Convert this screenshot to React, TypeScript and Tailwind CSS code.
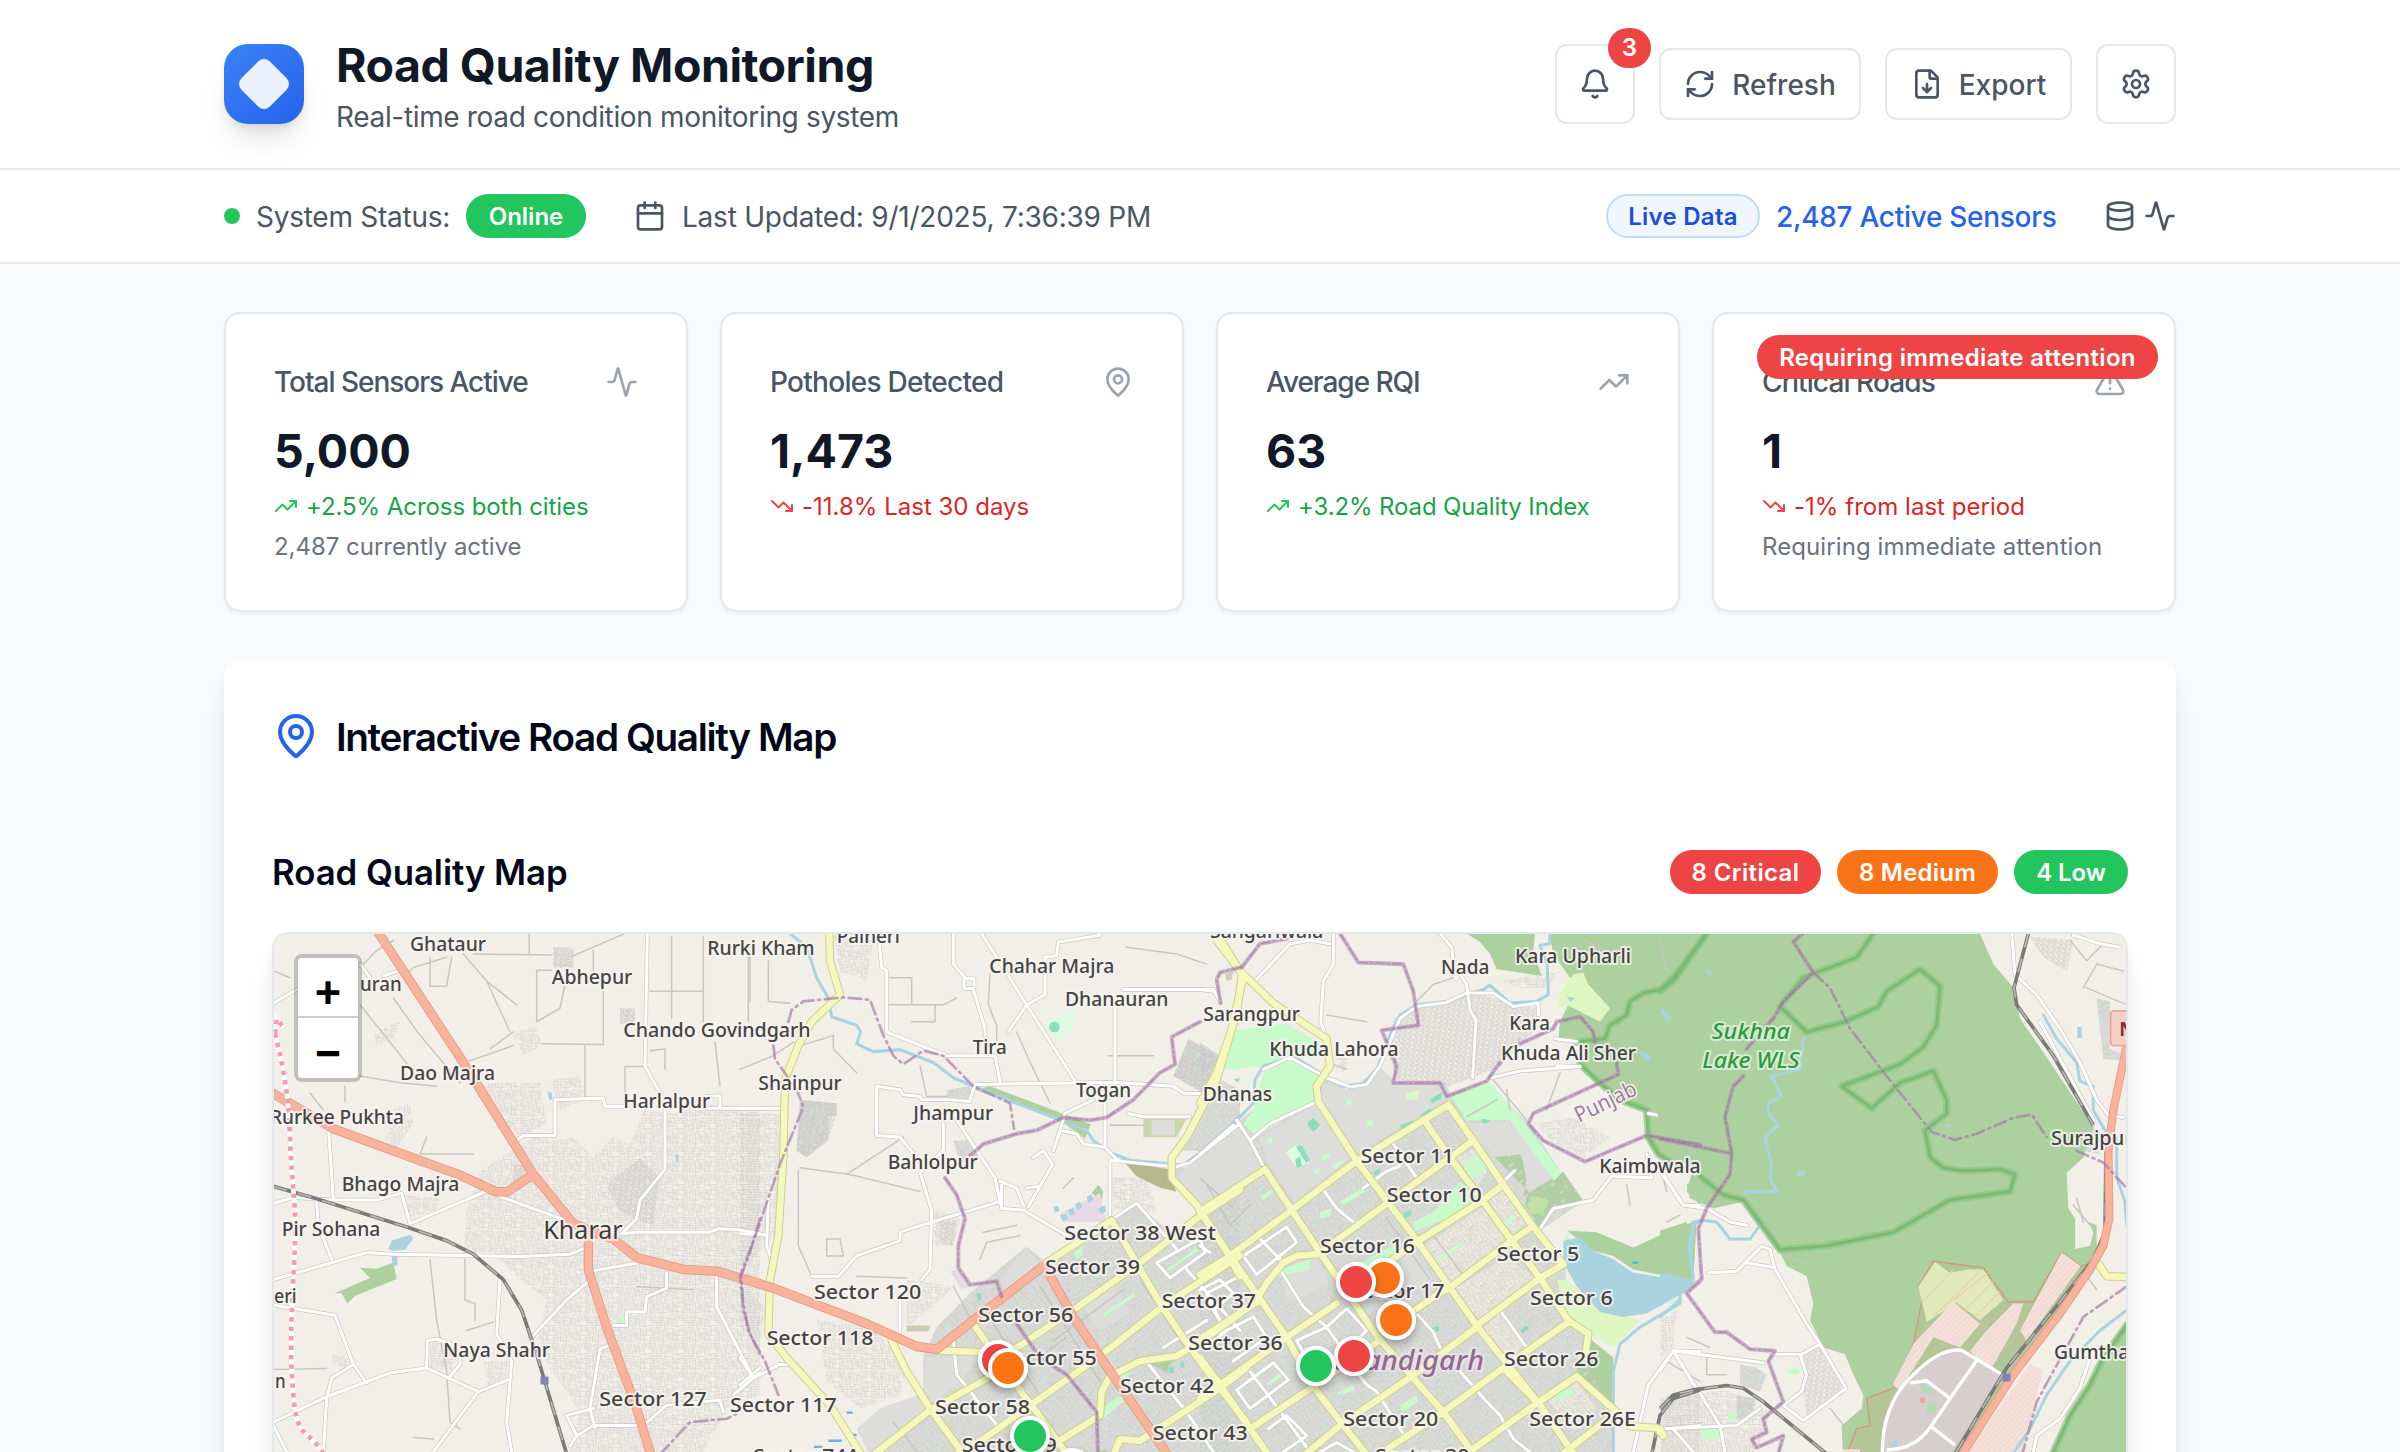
import type { ReactNode } from 'react';
import {
  Activity,
  Bell,
  Calendar,
  Database,
  FileDown,
  MapPin,
  RefreshCw,
  Settings,
  TrendingDown,
  TrendingUp,
  TriangleAlert,
  type LucideIcon,
} from 'lucide-react';

/* ------------------------------------------------------------------ */
/* Map data: four adjoining tiles, each in its own coordinate system   */
/* ------------------------------------------------------------------ */

type Tile = 'A' | 'B' | 'C' | 'D';
const TILE_X: Record<Tile, number> = { A: 260, B: 740, C: 1200, D: 1660 };
const TILES: Tile[] = ['A', 'B', 'C', 'D'];
const TILE_Y = 920;
const SX = 0.33333;
const SY = 0.33929;
const tile = (t: Tile) => `translate(${TILE_X[t]} ${TILE_Y}) scale(${SX} ${SY})`;
type PerTile = Record<Tile, string[]>;

const poly = (s: string, close = false) => 'M' + s + (close ? 'Z' : '');

function Layer({ data, close, ...rest }: { data: PerTile; close?: boolean } & Record<string, unknown>) {
  return (
    <g strokeLinejoin="round" strokeLinecap="round" fill="none" {...rest}>
      {TILES.map((t) => (
        <path key={t} transform={tile(t)} d={data[t].map((s) => poly(s, close)).join('')} />
      ))}
    </g>
  );
}

const CITY: PerTile = {
  A: [],
  B: [
    '550,1285 590,1200 690,1100 860,962 920,1010 1115,880 1190,835 1300,930 1390,860 1500,790 1500,1600 400,1600 350,1500 420,1440 550,1395',
    '1340,730 1500,600 1500,790 1390,860 1300,770 1300,730',
    '1320,680 1345,640 1440,470 1500,500 1500,580 1400,680',
    '1345,350 1435,400 1390,510 1300,460',
    '620,500 690,490 690,535 620,530', '180,530 290,540 290,575 265,580 265,650 200,700 170,680', '640,650 700,650 720,700 660,720',
  ],
  C: [
    '0,690 80,620 160,560 200,480 370,455 440,500 500,490 540,435 590,478 735,480 750,510 870,490 985,600 1085,745 1150,830 1020,915 1095,1010 1105,1180 1165,1220 1150,1290 1240,1440 1240,1600 0,1600',
    '0,360 60,400 30,450 0,450',
  ],
  D: ['1310,230 1350,240 1350,380 1400,400 1400,415 1330,410', '240,1310 290,1320 320,1340 300,1390 240,1370', '230,1400 290,1410 270,1470 230,1470', '1250,600 1300,600 1320,690 1270,680'],
};
/* Large plots inside the city that carry no street grid */
const PLAIN: PerTile = {
  A: [],
  B: ['560,1290 690,1285 800,1090 780,1060 860,965 905,1020 700,1180 740,1275 640,1380 560,1430 520,1480 430,1560 400,1590 350,1500 420,1440 550,1395', '1340,730 1500,610 1500,780 1390,850 1310,760', '1110,1060 1170,1160 1080,1210 1020,1130'],
  C: ['0,690 110,610 190,730 0,850', '370,480 440,500 540,440 590,480 735,485 740,530 470,690 360,530', '180,640 345,545 450,700 285,830 205,720', '770,600 930,595 1075,745 985,800 965,690 890,695 870,680', '290,1010 350,1000 390,1070 270,1130 240,1040', '600,990 640,980 700,1060 620,1110'],
  D: [],
};
const BEIGE: PerTile = {
  A: [],
  B: [],
  C: ['670,960 850,845 925,940 745,1070', '860,820 910,790 985,890 935,930', '760,1090 920,990 1010,1060 840,1180', '770,700 830,670 860,740 830,790', '850,1200 900,1160 980,1250 920,1300', '1030,1400 1130,1360 1190,1440 1120,1510'],
  D: [],
};
const FOREST: PerTile = {
  A: ['225,1100 330,1055 300,1025 350,1028 400,1010 410,1058 330,1090 285,1108 262,1130 245,1100'],
  B: ['705,500 750,490 1052,602 1035,645 960,590', '1075,780 1090,800 1085,825 1055,805', '1230,1290 1305,1280 1280,1335 1235,1310', '1060,1568 1100,1560 1100,1600'],
  C: [
    '800,40 1005,40 1000,90 1025,165 960,155 890,145 870,100 840,65',
    '1048,40 1500,40 1500,720 1400,712 1370,690 1340,640 1340,560 1240,510 1190,480 1140,430 1140,360 1075,350 1080,300 1150,160 1110,170 1060,100',
    '885,700 960,690 985,740 970,815 1090,742 1150,828 1060,855 1020,912 975,840 985,800',
    '1100,915 1190,920 1300,965 1400,920 1490,885 1480,1060 1400,1050 1300,1030 1240,990 1180,975',
    '1165,1230 1240,1290 1240,1440 1130,1330',
    '1475,745 1500,765 1500,840 1460,800',
  ],
  D: [
    '0,40 960,40 1000,130 1060,200 1080,290 1150,390 1300,610 1270,700 1220,745 1225,850 1245,880 1245,970 1290,960 1300,920 1285,890 1310,900 1310,1000 880,1600 550,1600 545,1490 605,1440 610,1400 580,1340 555,1280 490,1260 450,1180 460,1130 440,1050 380,1020 360,980 300,900 250,830 160,850 90,820 80,780 120,750 40,690 0,660',
    '0,915 80,890 100,960 90,1060 0,1060',
    '1400,1180 1330,1290 1290,1370 1230,1460 1170,1600 1400,1600',
  ],
};
const PARK: PerTile = {
  A: ['1070,1180 1095,1165 1095,1190'],
  B: ['1455,335 1500,325 1500,440 1450,440', '1085,1440 1150,1395 1150,1420 1090,1470', '1130,1345 1190,1325 1160,1345 1130,1370', '1280,1030 1370,965 1375,975 1285,1035', '1000,980 1030,960 1030,985 1010,1000', '1090,1160 1180,1100 1185,1110 1090,1170'],
  C: [
    '75,440 100,325 260,305 370,370 340,400 270,400 190,432',
    '190,450 270,405 370,460 345,530 170,640 130,600 160,560',
    '755,520 870,478 975,600 1085,745 1062,770 930,590 800,590',
    '790,720 830,690 860,730 820,765', '640,890 700,860 780,770 810,800 830,830 740,880 640,920', '480,1010 600,950 600,990 490,1030',
    '215,1040 330,1000 330,1030 240,1050', '1095,930 1110,915 1100,970', '1405,1130 1440,1110 1430,1130', '420,830 490,790 495,800 430,840',
    '600,1430 650,1400 655,1420 605,1450', '200,1365 250,1330 255,1340 205,1372', '410,1395 460,1370 465,1385 420,1400', '710,1000 780,950 785,960 715,1010',
    '1060,1400 1110,1380 1120,1400 1060,1420', '910,890 940,865 945,880 920,900', '180,815 215,795 218,805 190,825', '360,860 395,850 390,875 360,880', '500,590 520,590 520,608 502,608', '440,530 455,530 455,545 440,545',
    '360,700 385,685 390,700 370,712', '395,725 430,705 432,715 400,738', '200,650 215,640 218,655 205,660', '340,740 355,730 358,745 345,750',
  ],
  D: ['120,1495 175,1495 180,1530 125,1530', '205,1450 230,1450 225,1480 205,1480', '380,1325 415,1320 420,1335 390,1340', '20,1130 60,1110 50,1130'],
};
const LIME: PerTile = {
  A: [],
  B: [],
  C: ['1120,160 1150,155 1165,190 1230,260 1200,300 1100,250 1075,260 1080,215', '1070,1060 1100,1060 1200,1150 1320,1180 1240,1260 1165,1220 1100,1165', '620,510 660,500 650,530 620,530'],
  D: [],
};
const PITCH: PerTile = {
  A: [],
  B: ['930,305 945,300 958,315 945,330 930,322', '710,1100 722,1100 725,1120 714,1122', '1285,1320 1300,1315 1302,1335 1288,1336', '1320,1305 1332,1302 1334,1318 1322,1320'],
  C: ['320,600 340,583 360,605 340,625', '285,670 300,665 330,710 320,715', '600,605 640,590 640,605 605,620', '690,530 725,508 725,525 695,540', '845,585 870,590 860,600 848,598', '610,865 630,855 635,870 615,880', '285,710 300,698 305,725 288,730', '520,745 540,730 540,745 525,755', '690,1205 715,1195 718,1210 700,1218', '960,1210 980,1195 985,1205 968,1218', '660,575 690,555 700,565 670,580'],
  D: [],
};
const WATER: PerTile = {
  A: ['385,970 395,945 450,928 460,938 435,972 400,975', '395,990 412,990 412,1018 398,1020', '862,508 875,508 878,530 868,530', '1246,692 1255,692 1255,712 1248,712'],
  B: ['1040,815 1055,808 1060,825 1045,835', '1005,838 1020,830 1026,848 1012,855', '985,855 1000,848 1005,865 990,872', '960,872 978,866 985,880 970,888', '940,845 955,842 958,858 945,862', '1075,850 1095,840 1098,860 1080,865'],
  C: ['1090,945 1140,935 1180,975 1240,1000 1300,1040 1400,1055 1480,1060 1480,1085 1430,1110 1340,1160 1270,1170 1200,1155 1130,1080 1090,1010', '1380,260 1395,270 1415,290 1400,300', '1310,385 1345,395 1355,415 1335,410', '100,470 120,465 115,480', '1100,225 1125,230 1110,242'],
  D: ['0,1040 90,1060 70,1090 30,1120 0,1140', '410,740 440,740 430,755 415,755', '850,600 875,605 860,612', '138,140 158,160 145,162', '1252,315 1265,315 1265,348 1252,348', '0,260 30,280 25,300 5,275', '695,1540 715,1532 710,1550 690,1552'],
};
const STREAM: PerTile = {
  A: [],
  B: ['150,40 200,80 230,170 265,230 275,285 350,310 362,330 350,365 400,388 480,382 580,420 640,465 700,490 960,590 1040,620 1060,650 1110,685 1170,708 1330,722 1430,650 1500,575'],
  C: ['1050,40 1048,70 1020,75 1042,130 1045,220 1010,240 930,245 870,192 850,205 740,240 650,250 600,280 570,340 530,440 490,482 430,490 380,462 280,402 190,432 165,470 160,540 100,600 0,685', '1240,1600 1240,1330 1260,1250 1320,1200 1440,1130 1440,1100', '1500,885 1480,900 1470,980 1480,1060'],
  D: ['430,350 420,440 335,460 365,520 325,540 325,570 355,605 315,640 335,720 330,760 350,800 260,800 250,820 300,900 270,940 210,940 170,890 125,885 100,890 88,960 100,1060', '0,1170 60,1120', '1150,280 1190,350 1250,420 1260,475 1300,490 1300,560 1335,620', '1370,640 1370,760 1395,830 1400,900', '1400,1150 1320,1210 1230,1300 1160,1400 1110,1500 1040,1600'],
};
const TEXTURE: PerTile = {
  A: [
    '740,690 820,640 900,650 940,640 1000,700 1060,640 1110,660 1150,560 1240,570 1320,540 1500,560 1500,1400 1400,1440 1330,1568 930,1568 960,1450 830,1260 860,1120 780,1060 700,980 610,980 620,860 660,740',
    '880,80 940,80 940,140 880,140', '1080,260 1125,260 1125,305 1080,305', '755,330 830,315 845,370 790,400',
    '400,560 450,540 460,600 400,690 380,640', '340,330 420,300 400,350 350,370', '650,490 720,480 840,480 860,600 780,640 700,560', '870,470 960,460 980,530 900,560',
    '510,1240 600,1240 580,1330 510,1320', '670,1300 745,1300 735,1370 680,1370', '215,1280 270,1290 260,1320 215,1310', '420,810 540,820 530,850 450,880',
  ],
  B: ['0,570 130,570 130,900 0,1040', '280,40 400,60 380,180 300,150', '230,1180 400,1200 500,1320 480,1400 360,1440 260,1360', '500,1060 640,1080 600,1120 500,1200', '580,850 660,880 640,960 580,960', '1110,760 1220,760 1250,860 1120,850', '0,1080 80,1140 60,1240 0,1200'],
  C: ['1010,600 1120,580 1230,640 1150,700 1050,650', '400,400 450,410 430,450', '1080,150 1040,200 960,200 900,180', '1400,1400 1500,1390 1500,1568 1380,1568'],
  D: ['0,1410 200,1385 330,1450 290,1568 0,1568', '0,1180 50,1150 40,1260 0,1290'],
};
const DENSE: PerTile = {
  A: ['1040,780 1140,700 1200,760 1180,900 1080,860', '760,720 800,720 800,780 760,790', '880,80 940,80 940,140 880,140', '1080,260 1125,260 1125,305 1080,305'],
  B: ['180,530 290,540 290,575 265,640 200,700 170,680', '1345,350 1435,400 1390,510 1300,460', '600,880 650,890 640,960 600,950'],
  C: ['580,290 650,255 830,215 950,250 1020,260 1000,330 940,380 880,440 750,490 590,470 560,380'],
  D: ['430,1280 480,1260 550,1380 440,1460 430,1380', '1110,50 1240,60 1220,150 1150,110'],
};
const THIN: PerTile = {
  A: ['610,100 680,180 750,330', '640,100 875,103', '940,105 1090,42', '807,40 808,100', '875,148 830,148 830,300 900,260 915,190', '845,365 1030,367 1030,150', '975,370 975,520', '1170,210 1330,210', '1235,50 1235,290', '1330,50 1330,300', '630,415 760,370', '300,460 420,480 530,490', '510,1000 530,1180 560,1330 570,1480 600,1500', '1365,360 1380,490', '1215,380 1215,440', '1155,432 1095,432 1095,550', '1170,385 1215,380', '40,1325 200,1322', '620,1210 700,1185', '255,490 255,535', '150,510 190,560', '300,140 350,90 400,60', '300,250 390,360 470,460', '400,230 480,340 600,480', '430,170 460,140 560,110', '510,110 510,195 560,195 575,110', '500,640 480,690 640,690', '645,1180 645,1130 615,1120 615,1000', '1000,90 1000,150', '1470,100 1470,240', '690,380 760,330', '770,250 680,180', '1130,1080 1300,1090', '460,1525 520,1530', '90,170 40,150'],
  B: ['175,740 175,960 215,1050', '180,730 330,750 540,800', '180,370 250,350 280,340 280,380 350,450', '440,250 610,250 650,230', '450,170 515,170 515,250', '585,250 585,300 515,300', '1240,400 1105,400', '540,430 560,520 620,520', '320,750 490,640', '1110,605 1220,605', '830,330 880,440 930,540', '750,160 745,250 770,310 770,370', '0,440 100,400 160,360', '85,120 85,240 150,245', '25,100 25,300', '260,940 300,940 310,990 260,990Z', '1000,760 970,790', '730,920 830,900', '350,1050 500,1055', '720,1000 740,950 840,930', '640,1080 700,1190', '1160,80 1310,100 1400,130', '900,1080 1080,1360', '760,1190 900,1400', '1200,1060 1340,1270', '940,1240 1150,1090', '880,1300 980,1230', '600,1480 700,1600', '460,1480 560,1600'],
  C: ['650,240 700,190 760,170', '380,280 500,300', '960,350 900,430', '870,460 980,590', '800,580 890,530', '1080,450 1040,560', '1390,760 1400,800', '1150,60 1240,100 1290,70', '1380,50 1400,150', '1280,780 1290,840', '1400,1300 1500,1360', '0,760 100,850', '920,500 930,560', '380,420 440,440', '20,780 90,900 150,840', '60,830 190,750', '700,930 800,1060', '560,880 690,1060'],
  D: ['1230,60 1280,120 1330,70', '1270,200 1310,130 1390,150', '1280,200 1400,250', '80,1230 150,1260', '140,1280 140,1340 200,1340', '1240,840 1300,910', '1250,820 1270,890', '130,1050 60,1100', '510,1440 560,1500', '400,1000 440,1010', '20,890 60,870', '1280,1050 1310,1090'],
};
const WHITE: PerTile = {
  A: ['40,245 110,205', '370,165 415,150', '300,130 330,170', '1162,40 1155,430 1200,510', '770,650 790,635 885,635 885,530 1030,525 1035,550 1100,550', '1340,555 1500,555', '1380,555 1380,518 1340,520', '1215,560 1215,735 1140,825 1130,880 1085,925 1130,920 1350,920 1375,910 1430,912 1500,925', '205,610 220,825 350,825 425,805 450,895 690,795', '40,835 100,818 220,825', '170,830 175,900 215,1000', '40,1060 320,980 400,985 780,992 930,985 980,965', '720,815 930,890', '990,1035 1130,1012', '985,1065 920,1120 810,1235', '720,1060 710,1220 755,1300 740,1480 755,1568', '40,1135 225,1165 280,1310 320,1365', '40,1480 200,1405 390,1335 500,1320 655,1390 745,1355', '655,1390 520,1568', '500,1320 502,1240 530,1235 600,1260 600,1310 570,1345', '280,1310 215,1350 200,1410 190,1568', '40,1490 80,1568', '1005,1495 990,1440 1020,1265 1055,1250', '930,1550 950,1520 1000,1490 1150,1490 1220,1430 1380,1415 1390,1450', '950,1520 920,1460 1000,1440', '1220,1040 1220,1085 1160,1110 1155,1155 1100,1155 1100,1195 1060,1195', '1370,1040 1370,1140 1480,1350 1420,1400', '1480,1350 1500,1335'],
  B: ['640,40 640,130 675,170', '672,172 702,172 702,202 672,202Z', '700,205 735,320 735,340', '765,400 780,475', '725,40 860,250 1005,475', '860,250 805,330', '860,250 915,220 915,110 950,105 955,65 1080,45', '415,40 425,140 440,150 440,330 620,400 760,400', '690,530 705,485 1000,480 1125,478 1300,490 1330,510 1385,512', '1125,478 1125,250', '1150,205 1420,205 1440,240', '410,490 410,635 480,640 530,700', '410,490 480,500 490,515 540,520 545,530 635,530 690,535', '610,600 610,680 540,745 575,855 570,1030 545,1060', '650,590 765,760 785,850 850,855 980,930', '1060,530 975,570 960,620 1010,630 1030,660 1095,670 1135,710 1305,728 1350,715 1500,600', '960,620 940,680', '1095,540 1095,670', '1110,870 1110,710 1140,710', '880,700 910,680 938,720 865,845', '780,770 830,790 850,840', '860,790 900,785', '780,830 575,890 480,920 480,945 350,990 295,1050 215,1050', '785,770 785,850', '85,820 80,960 105,1030', '0,555 130,555', '0,925 80,928', '1165,570 1210,580 1350,580', '1120,880 1190,835 1310,970', '480,1120 480,1215', '640,1240 650,1340 780,1500', '1250,1010 1380,940 1395,980 1290,1055Z', '1340,1030 1500,1210', '0,1290 40,1350 120,1310', '150,1310 120,1310', '0,1370 60,1320', '1500,1050 1400,1100 1440,1180', '1210,1290 1340,1450 1420,1568', '1400,1180 1270,1260'],
  C: ['720,40 755,80 760,130 800,190 810,265 828,295 818,465', '400,40 400,130 370,180 362,300 380,350', '160,185 270,70 330,60 390,70', '110,590 150,650 195,735', '150,650 210,600 350,535', '0,205 40,210', '875,465 960,445 1140,432 1070,430', '1065,350 1130,358', '650,255 740,243 800,215 880,215 940,255 1015,245 1015,280', '190,440 270,405 380,465 450,492 500,485 540,430 600,290 650,255', '0,690 100,605', '910,770 945,738', '1020,910 1060,850 1180,825 1235,755 1355,760', '1340,690 1355,760', '1390,750 1450,840 1500,842', '1345,570 1370,575', '370,795 410,850 460,890', '490,790 560,740 600,725', '580,660 650,760', '130,990 260,905 290,950 170,1045Z', '180,940 250,1010', '240,1030 310,1140 380,1200 480,1340', '380,1200 440,1145 500,1210 440,1270', '380,1200 290,1240 320,1290', '900,1150 980,1260', '650,1160 700,1215 720,1260', '780,1330 860,1420 900,1460 940,1530 990,1568', '110,1385 220,1305 265,1355 150,1440Z', '150,1330 250,1460 330,1568', '205,1500 260,1460 320,1520 250,1568', '420,1270 500,1370 530,1390 620,1530', '0,1090 60,1060 100,1100 40,1150 80,1210 20,1260', '60,1220 160,1170 200,1230 100,1300', '1300,1568 1345,1370 1420,1270 1480,1370', '1420,1270 1500,1272', '1400,1500 1500,1490', '0,960 30,980', '360,1568 410,1540 460,1568'],
  D: ['1055,40 1065,160 1130,220 1200,320 1260,420 1310,530 1345,575 1390,582', '1240,45 1320,70 1380,80', '1140,300 1300,590', '40,1270 310,1305', '40,1270 180,1490 195,1568', '0,1330 40,1270', '340,1280 420,1280 440,1340 425,1390 370,1430 430,1475', '425,1280 480,1250 558,1380 430,1475', '480,1250 440,1190 345,1030 330,970 305,962 230,1035 145,1040', '345,1025 260,1010', '0,1500 230,1490 300,1440', '40,1500 100,1568', '1120,1568 1130,1520 1200,1470 1260,1380 1290,1290 1320,1260', '0,740 70,840 140,850 210,890 260,900'],
};
const YELLOW: PerTile = {
  A: [],
  B: ['268,40 270,120 300,220 215,300 175,370 135,470 130,700 115,930 90,1060 85,1220 140,1290 270,1430 380,1600', '1430,60 1500,150 1510,170 1470,340 1430,470 1340,640 1295,700 1295,760 1370,840 1465,985 1500,1050', '370,1600 570,1445 745,1350', '455,1240 500,1330 570,1440 690,1600', '590,1268 740,1275', '700,1190 760,1275 850,1400 890,1450 970,1560', '815,1270 1000,1150 1200,1010 1390,865 1500,795', '640,1580 730,1530 900,1410 1080,1285 1280,1130 1500,990', '920,1010 1115,885 1260,1130 1350,1260 1440,1380 1520,1480', '870,1590 1080,1460 1085,1390 1110,1345 1200,1300 1310,1285 1400,1230 1500,1160', '1110,1600 1140,1530 1200,1535 1440,1380 1520,1320'],
  C: ['50,40 120,150 220,245 380,350 390,430 350,490 355,535 470,710 640,930 830,1195 1020,1430 1140,1600', '125,165 110,280 50,450 0,540', '0,860 90,990 175,1110 260,1230 340,1375 430,1490 520,1600', '0,860 195,735', '195,735 275,855 360,980 530,1225 635,1345 730,1450 840,1600', '0,1045 90,990 275,855 470,710 745,545', '745,545 820,650 910,780 1000,905 1090,1015', '680,600 750,700 850,830 935,945 1020,1055 1105,1180 1165,1220 1155,1290', '360,980 555,840 820,650', '0,1235 180,1120', '175,1110 200,1070 250,1010 290,990 350,985', '550,1020 640,955 850,825 910,780', '260,1230 410,1130', '740,1090 935,945 995,905', '600,1180 740,1085', '830,1195 1020,1055 1090,1015', '0,1410 60,1370 260,1230', '340,1375 530,1245', '635,1345 830,1200', '730,1450 910,1320 1105,1185', '0,1290 60,1370 150,1500 230,1610', '150,1500 340,1375', '310,1580 420,1490 635,1345', '530,1580 730,1450', '790,1580 1010,1425 1130,1345 1250,1450', '910,1320 1020,1430', '1080,1580 1250,1450', '1290,1492 1370,1497 1390,1520'],
  D: ['1315,1012 1340,1050 1400,1052', '0,1500 10,1520'],
};
const ORANGE: PerTile = {
  A: ['350,30 610,420 820,750 940,895 1000,920 1060,940 1130,995 1200,1012 1270,1030 1370,1035 1500,1072', '20,500 220,615 400,680 600,752 705,800 740,802 820,750', '985,950 985,1030 1040,1200 1130,1440 1180,1600'],
  B: ['0,1055 100,1085 380,1190 530,1257 590,1265 700,1180 910,1020', '925,1040 1000,1170 1110,1330 1300,1600'],
  C: [],
  D: [],
};
const HIGHWAY: PerTile = { A: [], B: [], C: [], D: ['1398,380 1360,560 1345,680 1348,880 1330,960 1290,1030 1200,1160 1060,1340 890,1600'] };
const RAIL: PerTile = {
  A: ['40,785 165,820 440,905 560,945 640,985 730,1060 785,1150 830,1280 925,1590'],
  B: [],
  C: ['1350,1600 1380,1460 1420,1410 1500,1385'],
  D: ['1105,40 1062,200 1070,250 1180,400 1300,605', '1338,680 1335,920 1300,1000 1180,1150 1040,1320 960,1450 870,1600', '0,1440 40,1400 100,1385 200,1372 250,1380 310,1420 520,1590'],
};
const BORDER_SOLID: PerTile = {
  A: [],
  B: ['1500,140 1440,155 1430,175 1442,245', '1380,300 1295,345 1305,425 1260,450 1180,530 1100,582 1050,590 970,582 890,620 830,630 730,660 690,695', '615,760 650,810 675,880 655,960 655,1025 690,1075 770,1065 785,1110', '830,1190 900,1290 980,1340 1070,1450 1075,1600'],
  C: ['260,55 180,70 125,140', '420,40 475,125 610,130 640,210 655,310 545,325 590,430 580,480 720,480 740,520 860,475 900,420', '960,365 1060,320 1070,300 1140,285 1180,330 1185,360', '1250,420 1255,455 1000,570 985,600 1030,650 1155,712 1340,635 1500,662'],
  D: ['0,645 215,688', '215,688 210,750 140,850 115,910 125,1060 80,1100 165,1215 200,1215 270,1265 345,1270 325,1300 370,1420 310,1470 320,1510 275,1530 290,1555 370,1520 350,1590', '215,688 195,580 220,490 250,460', '260,380 340,290 370,240 460,155 400,65 430,38'],
};
const BORDER_DASH: PerTile = {
  A: ['1500,880 1470,980 1443,1050 1450,1130 1465,1210 1500,1280', '1200,1575 1290,1480 1400,1470 1430,1455'],
  B: ['145,300 155,265 190,240 310,228 390,235 430,340 460,400 490,425 550,385 610,400 700,490 810,540 822,615', '100,370 105,410 170,500 190,550 120,720 50,920 0,1050 10,1150 30,1220 75,1300 115,1400'],
  C: [],
  D: ['460,155 510,200 570,320 680,460 815,625 885,648 950,630 1060,583 1115,573 1160,640', '1250,680 1330,715 1400,790', '1400,1080 1270,1170 1180,1330 1130,1420 1080,1600'],
};
const RESERVE: PerTile = {
  A: [],
  B: [],
  C: ['1520,40 1420,170 1380,205 1330,215 1290,240 1280,280 1230,310 1215,350 1130,360', '1140,425 1200,480 1260,530 1340,560 1345,640 1375,690 1430,725'],
  D: ['140,40 40,180 0,210', '120,755 190,810 250,825 360,972 500,960 700,920 870,825 1050,800 1065,750 1020,735 910,740 850,730 810,700 795,620 860,570 860,530 820,445 720,480 635,555 545,490 720,425 790,375 830,310 840,195 780,145 680,210 655,255 555,300 440,330 360,255 430,170 590,110 640,40', '1400,1195 1330,1290 1290,1370 1230,1460 1170,1590'],
};
const QUARTER: PerTile = {
  A: [], B: [], C: [],
  D: ['880,1125 960,1190 900,1260 820,1230 720,1385 698,1370 760,1250', '1060,1130 1090,1130 1070,1190 990,1330 930,1270 980,1210', '1205,980 1262,1020 1100,1240 1080,1210', '1150,1325 1080,1600 900,1600 1110,1310', '550,1560 600,1560 600,1600 540,1600'],
};

const LABELS: { t: Tile; x: number; y: number; w: number; s: string; kind?: 'town' | 'city' | 'reserve' }[] = [
  { t: 'A', x: 450, y: 90, w: 228, s: 'Ghataur' },
  { t: 'A', x: 300, y: 208, w: 125, s: 'uran' },
  { t: 'A', x: 875, y: 190, w: 242, s: 'Abhepur' },
  { t: 'A', x: 1342, y: 103, w: 322, s: 'Rurki Kham' },
  { t: 'A', x: 1090, y: 344, w: 562, s: 'Chando Govindgarh' },
  { t: 'A', x: 420, y: 472, w: 285, s: 'Dao Majra' },
  { t: 'A', x: 1090, y: 555, w: 260, s: 'Harlalpur' },
  { t: 'A', x: 30, y: 602, w: 402, s: 'Rurkee Pukhta' },
  { t: 'A', x: 245, y: 799, w: 353, s: 'Bhago Majra' },
  { t: 'A', x: 65, y: 931, w: 296, s: 'Pir Sohana' },
  { t: 'A', x: 850, y: 940, w: 238, s: 'Kharar', kind: 'town' },
  { t: 'A', x: 42, y: 1130, w: 68, s: 'eri' },
  { t: 'A', x: 550, y: 1288, w: 320, s: 'Naya Shahr' },
  { t: 'A', x: 45, y: 1380, w: 32, s: 'n' },
  { t: 'A', x: 1018, y: 1433, w: 322, s: 'Sector 127' },
  { t: 'A', x: 1410, y: 1449, w: 320, s: 'Sector 117' },
  { t: 'B', x: 290, y: 68, w: 190, s: 'Palheri' },
  { t: 'B', x: 748, y: 157, w: 375, s: 'Chahar Majra' },
  { t: 'B', x: 975, y: 253, w: 310, s: 'Dhanauran' },
  { t: 'B', x: 698, y: 396, w: 102, s: 'Tira' },
  { t: 'B', x: 1008, y: 523, w: 165, s: 'Togan' },
  { t: 'B', x: 55, y: 500, w: 250, s: 'Shainpur' },
  { t: 'B', x: 520, y: 588, w: 240, s: 'Jhampur' },
  { t: 'B', x: 443, y: 735, w: 270, s: 'Bahlolpur' },
  { t: 'B', x: 973, y: 942, w: 455, s: 'Sector 38 West' },
  { t: 'B', x: 915, y: 1042, w: 285, s: 'Sector 39' },
  { t: 'B', x: 222, y: 1116, w: 322, s: 'Sector 120' },
  { t: 'B', x: 80, y: 1252, w: 320, s: 'Sector 118' },
  { t: 'B', x: 715, y: 1184, w: 285, s: 'Sector 56' },
  { t: 'B', x: 1265, y: 1143, w: 283, s: 'Sector 37' },
  { t: 'B', x: 1345, y: 1266, w: 283, s: 'Sector 36' },
  { t: 'B', x: 785, y: 1313, w: 285, s: 'Sector 55' },
  { t: 'B', x: 1140, y: 1394, w: 283, s: 'Sector 42' },
  { t: 'B', x: 1238, y: 1532, w: 285, s: 'Sector 43' },
  { t: 'B', x: 585, y: 1455, w: 285, s: 'Sector 58' },
  { t: 'B', x: 665, y: 1569, w: 285, s: 'Sector 59' },
  { t: 'B', x: 40, y: 1600, w: 320, s: 'Sector 74A' },
  { t: 'C', x: 30, y: 52, w: 340, s: 'Sangariwala' },
  { t: 'C', x: 10, y: 299, w: 290, s: 'Sarangpur' },
  { t: 'C', x: 8, y: 533, w: 208, s: 'Dhanas' },
  { t: 'C', x: 723, y: 159, w: 145, s: 'Nada' },
  { t: 'C', x: 945, y: 127, w: 348, s: 'Kara Upharli' },
  { t: 'C', x: 928, y: 323, w: 122, s: 'Kara' },
  { t: 'C', x: 208, y: 400, w: 388, s: 'Khuda Lahora' },
  { t: 'C', x: 903, y: 414, w: 405, s: 'Khuda Ali Sher' },
  { t: 'C', x: 482, y: 717, w: 280, s: 'Sector 11' },
  { t: 'C', x: 560, y: 831, w: 285, s: 'Sector 10' },
  { t: 'C', x: 360, y: 980, w: 285, s: 'Sector 16' },
  { t: 'C', x: 890, y: 1005, w: 248, s: 'Sector 5' },
  { t: 'C', x: 450, y: 1113, w: 283, s: 'Sector 17' },
  { t: 'C', x: 990, y: 1135, w: 248, s: 'Sector 6' },
  { t: 'C', x: 392, y: 1325, w: 460, s: 'Chandigarh', kind: 'city' },
  { t: 'C', x: 912, y: 1314, w: 283, s: 'Sector 26' },
  { t: 'C', x: 430, y: 1490, w: 285, s: 'Sector 20' },
  { t: 'C', x: 988, y: 1490, w: 320, s: 'Sector 26E' },
  { t: 'C', x: 525, y: 1600, w: 283, s: 'Sector 30' },
  { t: 'C', x: 1198, y: 746, w: 304, s: 'Kaimbwala' },
  { t: 'D', x: 155, y: 352, w: 235, s: 'Sukhna', kind: 'reserve' },
  { t: 'D', x: 127, y: 437, w: 292, s: 'Lake WLS', kind: 'reserve' },
  { t: 'D', x: 1173, y: 662, w: 245, s: 'Surajpur' },
  { t: 'D', x: 1182, y: 1293, w: 275, s: 'Gumthala' },
];

const LABEL_STYLE = {
  place: { fontSize: 20.6, fill: '#444444', stroke: '#f7f5f1' },
  town: { fontSize: 24.5, fill: '#3c3c3c', stroke: '#f7f5f1' },
  city: { fontSize: 26.5, fill: '#93698f', stroke: '#ece6ec' },
  reserve: { fontSize: 21.5, fill: '#2a9a3c', stroke: '#e3f2df' },
};

function MapDrawing() {
  return (
    <svg className="absolute inset-0" width="1852" height="518" viewBox="274 934 1852 518" fontFamily="'Noto Sans', sans-serif">
      <defs>
        <pattern id="streets" width="66" height="54" patternUnits="userSpaceOnUse" patternTransform="rotate(-33)">
          <path
            d="M0 1H66M0 10H18M24 8H46M52 12H66M0 18H28M34 16H66M8 25H40M46 22H60M0 32H22M28 30H66M6 39H34M40 37H60M0 46H24M30 45H66M12 50H50M1 0V54M7 18V32M13 0V18M18 25V46M24 1V18M30 16V30M34 30V54M41 0V16M40 22V45M47 16V37M53 0V22M54 30V54M60 12V30M61 37V45"
            stroke="#c3c2c1"
            strokeWidth="1.2"
            fill="none"
          />
        </pattern>
        <pattern id="blocks" width="74" height="58" patternUnits="userSpaceOnUse" patternTransform="rotate(-33)">
          <rect x="12" y="10" width="15" height="4" fill="#bdf2c2" />
          <rect x="48" y="34" width="4" height="9" fill="#bdf2c2" />
          <rect x="62" y="6" width="5" height="5" fill="#bdf2c2" />
          <rect x="24" y="44" width="10" height="3" fill="#bdf2c2" />
        </pattern>
        <pattern id="village" width="97" height="83" patternUnits="userSpaceOnUse">
          <path
            d="M0 4H22M30 6H58M66 3H97M4 11H34M40 12H72M80 10H97M0 18H26M34 19H50M58 17H90M8 25H44M52 26H80M0 33H18M26 32H62M70 34H97M6 40H40M48 41H76M0 48H30M38 47H56M64 49H97M12 55H46M54 56H84M0 62H24M32 63H66M74 61H97M6 70H38M46 69H78M0 77H20M28 78H60M68 76H97M4 0V18M10 4V25M17 11V33M22 0V11M26 18V40M34 6V25M40 12V32M44 0V12M50 19V41M58 6V26M62 17V34M66 0V17M72 12V34M80 3V26M86 17V41M92 4V18M6 33V55M12 40V62M18 48V70M30 40V63M38 32V55M46 47V69M54 41V63M60 49V78M66 56V76M76 41V61M84 49V76M92 34V61M8 62V83M20 70V83M28 63V83M38 70V83M46 69V83M74 61V83M88 61V83M14 78V83"
            stroke="#cccac6"
            strokeWidth="1.5"
            fill="none"
          />
        </pattern>
        <pattern id="dense" width="17" height="15" patternUnits="userSpaceOnUse" patternTransform="rotate(8)">
          <path d="M0 .5H17M0 5.5H8M6 10.5H17M.5 0V10M8 0V15M12.5 5V15M4 5V10M12 0V5" stroke="#c6c4c1" strokeWidth="1.4" fill="none" />
        </pattern>
        <pattern id="hatch" width="12" height="12" patternUnits="userSpaceOnUse" patternTransform="rotate(45)">
          <path d="M.5 0V12" stroke="#efb5a8" strokeWidth="1" />
        </pattern>
      </defs>
      <rect x="274" y="934" width="1852" height="518" fill="#f2efe9" />

      <Layer data={CITY} close fill="#dddddc" />
      <Layer data={BEIGE} close fill="#f0ebe3" />
      <Layer data={FOREST} close fill="#add19e" />
      <Layer data={TEXTURE} close fill="url(#village)" />
      <Layer data={DENSE} close fill="url(#dense)" />
      <Layer data={CITY} close fill="url(#streets)" />
      <Layer data={CITY} close fill="url(#blocks)" />
      <Layer data={PLAIN} close fill="#dddddc" />
      <Layer data={PARK} close fill="#c8facc" />
      <Layer data={LIME} close fill="#def6c0" />
      <Layer data={PITCH} close fill="#88e0be" />

      <g transform={tile('D')}>
        <path d="M620 1410 700 1380 760 1250 790 1100 775 1080 820 1005 970 1025 1045 1125 1120 1125 1205 980 1262 1020 1300 1010 880 1600H550L590 1500 630 1490Z" fill="#b4c698" stroke="#cf9a7b" strokeWidth="4" />
        <path d="M825 1008 870 1040 920 1030 970 1030 1030 1120 960 1180 890 1128 800 1185 775 1080Z" fill="#e0e9b8" />
        <path d="M785 1130 880 1030M820 1170 960 1035M880 1120 985 1040M915 1150 1000 1065M945 1170 1020 1095" stroke="#e9cfae" strokeWidth="3" />
      </g>
      <Layer data={QUARTER} close fill="#f3e0da" />
      <Layer data={QUARTER} close fill="url(#hatch)" />
      <g transform={tile('D')}>
        <path d="M668 1600 670 1480 740 1360 830 1290 900 1265 950 1290 1035 1345 860 1590Z" fill="#d9cfd0" />
        <path d="M668 1600 670 1480 740 1360 830 1290 900 1265 950 1290 1035 1345 860 1590Z" fill="url(#dense)" opacity=".35" />
        <g fill="none" stroke="#fff" strokeWidth="10" strokeLinejoin="round">
          <path d="M668 1600C660 1480 700 1400 750 1350S850 1262 905 1268L1035 1345" />
          <path d="M955 1292 870 1410 815 1490C780 1540 740 1560 680 1562M750 1365 800 1358 870 1410M812 1492 885 1548" />
        </g>
        <path d="M782 1366 820 1382 818 1400 784 1388ZM800 1426h26v26h-26z" fill="#b5dbb0" />
        <circle cx="787" cy="1416" r="9" fill="#f0a3a3" />
      </g>

      <g transform={tile('B')}>
        <path d="M915 300 1000 268 1003 320 955 362Z" fill="#dffce2" />
        <circle cx="943" cy="315" r="16" fill="#88e0be" />
        <path d="M1210 585H1340L1310 640H1210Z" fill="#c9d8a8" />
        <path d="M1235 590H1305V635H1235Z" fill="#dddddc" />
        <path d="M1150 710 1290 735 1308 800 1262 790 1190 755Z" fill="#b5b78e" />
        <path d="M960 865 1080 805 1100 890 965 890Z" fill="#e8d9e4" />
        <path d="M500 1195H572L565 1213H500Z" fill="#cccdb4" />
        <path d="M630 1035 655 1030 690 1080 665 1088Z" fill="#e6dbe6" />
        <path d="M265 1535h40M222 1553h26M320 1452h18M336 1518h14" stroke="#66b0f0" strokeWidth="7" />
      </g>
      <g transform={tile('C')}>
        <path d="M258 685 290 662 330 715 290 730Z" fill="#dffce2" />
        <path d="M288 668 305 664 330 708 318 716ZM286 705 300 698 306 725 290 732Z" fill="#88e0be" />
        <path d="M1298 1010h16" stroke="#5aa9f0" strokeWidth="7" />
        <path d="M75 160 100 150 95 175 80 180Z" fill="#d0cfb8" />
        <path d="M980 835 1010 815 1048 828 1030 862 992 868Z" fill="#c3e0a6" />
      </g>

      <Layer data={WATER} close fill="#aad3df" />
      <Layer data={STREAM} stroke="#a9d3e0" strokeWidth="9" />
      <Layer data={RESERVE} stroke="#8fc586" strokeWidth="22" strokeOpacity=".75" />
      <Layer data={RESERVE} stroke="#7dba74" strokeWidth="9" />

      <Layer data={THIN} stroke="#c8c6c3" strokeWidth="4.5" />
      <Layer data={WHITE} stroke="#c9c7c4" strokeWidth="13" />
      <Layer data={WHITE} stroke="#ffffff" strokeWidth="9" />
      <Layer data={RAIL} stroke="#7a7a78" strokeWidth="11" strokeLinecap="butt" />
      <Layer data={RAIL} stroke="#b9b8b5" strokeWidth="5" strokeDasharray="42 34" strokeLinecap="butt" />
      <Layer data={YELLOW} stroke="#cdd08d" strokeWidth="25" />
      <Layer data={YELLOW} stroke="#f5f8bd" strokeWidth="19" />
      <Layer data={ORANGE} stroke="#e39b7e" strokeWidth="28" strokeLinecap="butt" />
      <Layer data={ORANGE} stroke="#f9b29c" strokeWidth="23" />
      <Layer data={HIGHWAY} stroke="#ec9c86" strokeWidth="25" />
      <Layer data={HIGHWAY} stroke="#f9b29c" strokeWidth="19" />

      <g transform={tile('A')} fill="none">
        <path d="M45 335 50 292 70 315M45 335C60 400 85 480 90 640S112 820 103 1000 88 1260 100 1400 140 1490 195 1580" stroke="#fff" strokeWidth="14" />
        <path d="M45 335 50 292 70 315M45 335C60 400 85 480 90 640S112 820 103 1000 88 1260 100 1400 140 1490 195 1580" stroke="#f29bb2" strokeWidth="14" strokeDasharray="13 15" />
      </g>
      <Layer data={BORDER_SOLID} stroke="#ac83ad" strokeOpacity=".6" strokeWidth="12" />
      <Layer data={BORDER_SOLID} stroke="#8d6492" strokeOpacity=".45" strokeWidth="4" strokeDasharray="26 10 5 10" />
      <Layer data={BORDER_DASH} stroke="#a67da8" strokeOpacity=".7" strokeWidth="8" strokeDasharray="38 14 6 14" />

      <g fill="#7f84b9">
        <rect x="540.5" y="1376.5" width="8" height="8" />
        <rect x="2002.5" y="1373.5" width="8" height="8" />
      </g>
      <g transform={tile('D')}>
        <rect x="1352" y="268" width="90" height="102" rx="10" fill="#f6cfc5" stroke="#eba594" strokeWidth="5" />
        <text x="1378" y="342" fontSize="56" fontWeight="700" fill="#8a2d2d">N</text>
      </g>

      {LABELS.map(({ t, x, y, w, s, kind }) => {
        const st = LABEL_STYLE[kind ?? 'place'];
        return (
          <text
            key={t + x + y}
            x={TILE_X[t] + x * SX}
            y={TILE_Y + y * SY}
            textLength={w * SX}
            lengthAdjust="spacingAndGlyphs"
            fontSize={st.fontSize}
            fontStyle={kind === 'city' || kind === 'reserve' ? 'italic' : 'normal'}
            fontWeight={kind === 'town' ? 400 : 500}
            fill={st.fill}
            stroke={st.stroke}
            strokeOpacity=".8"
            strokeWidth="4"
            strokeLinejoin="round"
            paintOrder="stroke"
          >
            {s}
          </text>
        );
      })}
      <text x="1579" y="1123" fontSize="22" fill="#a07ba0" stroke="#f7f5f1" strokeWidth="3" paintOrder="stroke" textLength="66" lengthAdjust="spacingAndGlyphs" transform="rotate(-26 1579 1123)">
        Punjab
      </text>
    </svg>
  );
}

/* ------------------------------------------------------------------ */
/* Markers                                                             */
/* ------------------------------------------------------------------ */

const MARKERS: [number, number, string][] = [
  [998, 1360, 'bg-[#ef4444]'],
  [1008, 1368, 'bg-[#f97316]'],
  [1030, 1436, 'bg-[#22c55e]'],
  [1072, 1468, 'bg-[#ef4444]'],
  [1384, 1278, 'bg-[#f97316]'],
  [1356, 1282, 'bg-[#ef4444]'],
  [1396, 1320, 'bg-[#f97316]'],
  [1354, 1356, 'bg-[#ef4444]'],
  [1316, 1366, 'bg-[#22c55e]'],
];

/* ------------------------------------------------------------------ */
/* UI                                                                  */
/* ------------------------------------------------------------------ */

function Pill({ className, children }: { className: string; children: ReactNode }) {
  return (
    <span className={`flex h-11 items-center justify-center whitespace-nowrap rounded-full pt-px text-[24px] font-semibold leading-8 ${className}`}>
      {children}
    </span>
  );
}

const BUTTON = 'flex items-center justify-center rounded-xl border-2 border-[#e5e7eb] bg-white text-[28px] font-medium leading-10 text-[#4b5563]';

interface Stat {
  title: string;
  titleTracking: string;
  icon: LucideIcon;
  value: string;
  up: boolean;
  change: string;
  changeTracking: string;
  note?: string;
  noteTracking?: string;
  alert?: string;
}

const STATS: Stat[] = [
  { title: 'Total Sensors Active', titleTracking: 'tracking-[-1.03px]', icon: Activity, value: '5,000', up: true, change: '+2.5% Across both cities', changeTracking: 'tracking-[-0.07px]', note: '2,487 currently active', noteTracking: 'tracking-[-0.03px]' },
  { title: 'Potholes Detected', titleTracking: 'tracking-[-0.72px]', icon: MapPin, value: '1,473', up: false, change: '-11.8% Last 30 days', changeTracking: 'tracking-[0.01px]' },
  { title: 'Average RQI', titleTracking: 'tracking-[-1.04px]', icon: TrendingUp, value: '63', up: true, change: '+3.2% Road Quality Index', changeTracking: 'tracking-[-0.12px]' },
  { title: 'Critical Roads', titleTracking: 'tracking-[-0.9px]', icon: TriangleAlert, value: '1', up: false, change: '-1% from last period', changeTracking: 'tracking-[0.03px]', note: 'Requiring immediate attention', noteTracking: 'tracking-[0.09px]', alert: 'Requiring immediate attention' },
];

function StatCard({ stat }: { stat: Stat }) {
  const Trend = stat.up ? TrendingUp : TrendingDown;
  return (
    <div className="relative h-[300px] rounded-2xl border-2 border-[#e2e8f0] bg-white p-12 shadow-[0_2px_4px_0_rgba(0,0,0,0.05)]">
      {stat.alert && (
        <div className="absolute right-4 top-[21px]">
          <Pill className="w-[401px] bg-[#ef4444] tracking-[0.33px] text-white">{stat.alert}</Pill>
        </div>
      )}
      <div className="flex h-10 items-center justify-between">
        <h3 className={`whitespace-nowrap text-[28px] font-medium leading-10 text-[#4b5563] ${stat.titleTracking}`}>{stat.title}</h3>
        <stat.icon className="size-8 text-[#9ca3af]" />
      </div>
      <div className="-mb-0.5 mt-4 text-[46.5px] font-bold leading-[66px] text-[#111827]">{stat.value}</div>
      <div className={`mt-2 flex h-8 items-center gap-2 whitespace-nowrap text-[24px] leading-8 ${stat.up ? 'text-[#16a34a]' : 'text-[#dc2626]'} ${stat.changeTracking}`}>
        <Trend className={`size-6 ${stat.up ? 'text-[#22c55e]' : 'text-[#ef4444]'}`} />
        <span className="pt-px">{stat.change}</span>
      </div>
      {stat.note && <div className={`mt-2 whitespace-nowrap pt-px text-[24px] leading-8 text-[#6b7280] ${stat.noteTracking}`}>{stat.note}</div>}
    </div>
  );
}

export default function App() {
  return (
    <div className="h-[1452px] w-full overflow-hidden bg-[#f9fafb] font-['Inter',sans-serif]">
      <header className="h-[170px] border-b-2 border-[#e5e7eb] bg-white">
        <div className="mx-auto flex h-[168px] w-[1952px] items-center justify-between">
          <div className="flex items-center gap-8">
            <div className="flex size-20 items-center justify-center rounded-3xl bg-linear-to-br from-[#3b82f6] to-[#2563eb] shadow-[0_20px_30px_-6px_rgba(0,0,0,0.1),0_8px_12px_-4px_rgba(0,0,0,0.1)]">
              <div className="size-10 rotate-45 rounded-lg bg-white/90" />
            </div>
            <div>
              <h1 className="-mb-px whitespace-nowrap text-[46.5px] font-bold leading-[66px] tracking-[-0.5px] text-[#111827]">Road Quality Monitoring</h1>
              <p className="whitespace-nowrap text-[28px] leading-10 tracking-[-0.34px] text-[#4b5563]">Real-time road condition monitoring system</p>
            </div>
          </div>
          <div className="flex items-center gap-6">
            <button className={`relative size-20 ${BUTTON}`}>
              <Bell className="size-8" />
              <span className="absolute -right-[18px] -top-[18px] flex h-10 w-[43px] items-center justify-center rounded-full bg-[#ef4444] text-[24px] font-semibold leading-8 text-white">3</span>
            </button>
            <button className={`h-[72px] w-[202px] gap-4 ${BUTTON}`}>
              <RefreshCw className="size-8" />
              <span className="pt-px">Refresh</span>
            </button>
            <button className={`h-[72px] w-[187px] gap-4 ${BUTTON}`}>
              <FileDown className="size-8" />
              <span className="pt-px">Export</span>
            </button>
            <button className={`size-20 ${BUTTON}`}>
              <Settings className="size-8" />
            </button>
          </div>
        </div>
      </header>

      <div className="h-[94px] border-b-2 border-[#e5e7eb] bg-white">
        <div className="mx-auto flex h-[92px] w-[1952px] items-center justify-between text-[28px] leading-10 text-[#4b5563]">
          <div className="flex items-center gap-12">
            <div className="flex items-center gap-4">
              <span className="size-4 rounded-full bg-[#22c55e]" />
              <span className="w-[194px] whitespace-nowrap pt-px tracking-[-0.25px]">System Status:</span>
              <Pill className="w-[120px] bg-[#22c55e] text-white">Online</Pill>
            </div>
            <div className="flex items-center gap-4">
              <Calendar className="size-8" />
              <span className="whitespace-nowrap pt-px tracking-[-0.23px]">Last Updated: 9/1/2025, 7:36:39 PM</span>
            </div>
          </div>
          <div className="flex items-center gap-12">
            <div className="flex items-center gap-4">
              <Pill className="w-[154px] border-2 border-[#bfdbfe] bg-[#eff6ff] tracking-[0.26px] text-[#1d4ed8]">Live Data</Pill>
              <span className="w-[280px] whitespace-nowrap pt-px font-medium tracking-[-0.29px] text-[#2563eb]">2,487 Active Sensors</span>
            </div>
            <div className="flex items-center gap-2">
              <Database className="size-8" />
              <Activity className="size-8" />
            </div>
          </div>
        </div>
      </div>

      <main className="mx-auto flex w-[1952px] flex-col gap-12 pt-12">
        <section className="grid grid-cols-4 gap-8">
          {STATS.map((s) => (
            <StatCard key={s.title} stat={s} />
          ))}
        </section>

        <section className="rounded-2xl bg-white p-12 shadow-[0_20px_30px_-6px_rgba(0,0,0,0.1),0_8px_12px_-4px_rgba(0,0,0,0.1)]">
          <div className="flex h-14 items-center gap-4">
            <MapPin className="size-12 text-[#2563eb]" />
            <h2 className="whitespace-nowrap pt-px text-[38.7px] font-semibold leading-[56px] tracking-[-1.38px] text-[#020817]">Interactive Road Quality Map</h2>
          </div>
          <div className="mt-20 flex h-14 items-center justify-between">
            <h3 className="whitespace-nowrap text-[34.8px] font-semibold leading-[56px] tracking-[-0.07px] text-[#020817]">Road Quality Map</h3>
            <div className="flex gap-4">
              <Pill className="w-[151px] bg-[#ef4444] tracking-[0.36px] text-white">8 Critical</Pill>
              <Pill className="w-[161px] bg-[#f97316] tracking-[0.2px] text-white">8 Medium</Pill>
              <Pill className="w-[114px] bg-[#22c55e] tracking-[-0.1px] text-white">4 Low</Pill>
            </div>
          </div>
          <div className="relative mt-8 h-[800px] overflow-hidden rounded-2xl border-2 border-[#e2e8f0] bg-[#f2efe9] shadow-[0_20px_30px_-6px_rgba(0,0,0,0.1),0_8px_12px_-4px_rgba(0,0,0,0.1)]">
            <MapDrawing />
            {MARKERS.map(([x, y, color]) => (
              <div
                key={`${x}-${y}`}
                className={`absolute size-10 -translate-x-1/2 -translate-y-1/2 rounded-full border-4 border-white shadow-[0_4px_8px_rgba(0,0,0,0.3)] ${color}`}
                style={{ left: x - 274, top: y - 934 }}
              />
            ))}
            <div className="absolute left-5 top-5 w-[68px] overflow-hidden rounded-lg border-4 border-black/20 bg-clip-padding">
              <button className="flex h-[60px] w-full items-center justify-center border-b-2 border-[#ccc] bg-white pt-1 text-[46px] font-semibold leading-[50px] text-black">+</button>
              <button className="flex h-[60px] w-full items-center justify-center bg-white pt-1 text-[46px] font-semibold leading-[50px] text-black">−</button>
            </div>
          </div>
        </section>
      </main>
    </div>
  );
}
